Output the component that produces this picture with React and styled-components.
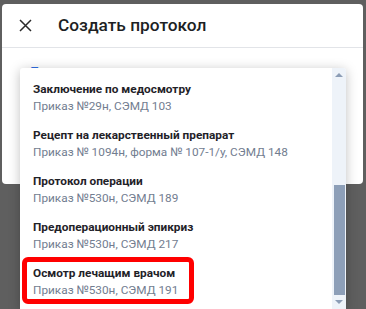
import React from "react";
import styled, { createGlobalStyle } from "styled-components";

const Global = createGlobalStyle`
  html, body { margin: 0; padding: 0; }
  body {
    background: #5f5f5f;
    font-family: Roboto, "Noto Sans", sans-serif;
    width: 366px;
    height: 309px;
    overflow: hidden;
  }
`;

const Stage = styled.div`
  position: relative;
  width: 366px;
  height: 309px;
  padding: 4px 3px 0 2px;
  box-sizing: border-box;
`;

const Dialog = styled.div`
  background: #fff;
  border-radius: 4px;
  height: 180px;
  display: flex;
  flex-direction: column;
`;

const Header = styled.div`
  height: 44px;
  display: flex;
  align-items: center;
  border-bottom: 1px solid #e2e4e8;
  box-sizing: border-box;
  padding-left: 14px;
  gap: 24px;
`;

const CloseBtn = styled.button`
  width: 18px;
  height: 18px;
  padding: 0;
  border: 0;
  background: none;
  display: flex;
  align-items: center;
  justify-content: center;
  color: #222;
`;

const Title = styled.h1`
  margin: 0;
  font-size: 17.3px;
  font-weight: 500;
  color: #1d1f24;
  line-height: 24px;
  position: relative;
  top: -1px;
`;

const Body = styled.div`
  padding: 16px 0 0 29px;
`;

const FieldLabel = styled.div`
  font-size: 12px;
  line-height: 16px;
  color: #2f6fe4;
  font-weight: 500;
`;

const Dropdown = styled.div`
  position: absolute;
  left: 20px;
  top: 68px;
  width: 326px;
  height: 241px;
  background: #fff;
  border-radius: 3px 3px 0 0;
  box-shadow: 0 2px 12px rgba(0, 0, 0, 0.25);
  display: flex;
  overflow: hidden;
`;

const List = styled.div`
  flex: 1;
  padding-top: 7px;
  overflow: hidden;
`;

const Item = styled.div`
  padding: 6px 0 6px 13px;
  display: flex;
`;

const ItemText = styled.div`
  display: inline-flex;
  flex-direction: column;
  ${(p) =>
    p.$highlight &&
    `
    border: 5px solid #ff0000;
    border-radius: 6px;
    padding: 3px 11px 0 6px;
    margin: -8px 0 -5px -11px;
  `}
`;

const ItemTitle = styled.div`
  font-size: 11.8px;
  line-height: 17px;
  font-weight: 700;
  color: #1f2228;
`;

const ItemSub = styled.div`
  font-size: 11.8px;
  line-height: 17px;
  color: #727d90;
`;

const Scrollbar = styled.div`
  width: 14px;
  background: #eef3f9;
  display: flex;
  flex-direction: column;
  align-items: center;
`;

const Arrow = styled.div`
  height: 14px;
  width: 14px;
  display: flex;
  align-items: center;
  justify-content: center;
  &::before {
    content: "";
    width: 0;
    height: 0;
    border-left: 4px solid transparent;
    border-right: 4px solid transparent;
    ${(p) =>
      p.$down
        ? "border-top: 4px solid #8c9db6;"
        : "border-bottom: 4px solid #8c9db6;"}
  }
`;

const Track = styled.div`
  flex: 1;
  width: 100%;
  display: flex;
  flex-direction: column;
  justify-content: flex-end;
  align-items: center;
`;

const Thumb = styled.div`
  width: 11px;
  height: 110px;
  background: #8d9fb8;
`;

const items = [
  { t: "Заключение по медосмотру", s: "Приказ №29н, СЭМД 103" },
  { t: "Рецепт на лекарственный препарат", s: "Приказ № 1094н, форма № 107-1/у, СЭМД 148" },
  { t: "Протокол операции", s: "Приказ №530н, СЭМД 189" },
  { t: "Предоперационный эпикриз", s: "Приказ №530н, СЭМД 217" },
  { t: "Осмотр лечащим врачом", s: "Приказ №530н, СЭМД 191", h: true },
];

export default function App() {
  return (
    <>
      <Global />
      <Stage>
        <Dialog>
          <Header>
            <CloseBtn aria-label="close">
              <svg width="13" height="13" viewBox="0 0 13 13">
                <path d="M1 1 L12 12 M12 1 L1 12" stroke="#2a2a2a" strokeWidth="1.5" fill="none" />
              </svg>
            </CloseBtn>
            <Title>Создать протокол</Title>
          </Header>
          <Body>
            <FieldLabel>Тип протокола</FieldLabel>
          </Body>
        </Dialog>
        <Dropdown>
          <List>
            {items.map((it, i) => (
              <Item key={i}>
                <ItemText $highlight={it.h}>
                  <ItemTitle>{it.t}</ItemTitle>
                  <ItemSub>{it.s}</ItemSub>
                </ItemText>
              </Item>
            ))}
          </List>
          <Scrollbar>
            <Arrow />
            <Track>
              <Thumb />
            </Track>
            <Arrow $down />
          </Scrollbar>
        </Dropdown>
      </Stage>
    </>
  );
}
